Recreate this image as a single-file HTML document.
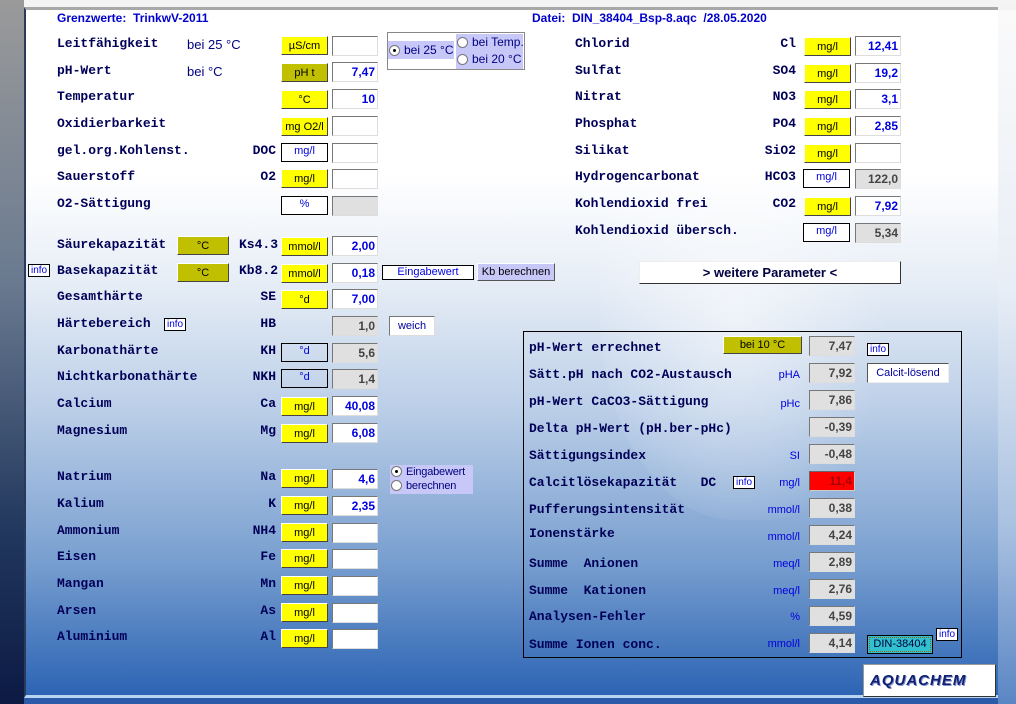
<!DOCTYPE html><html><head><meta charset="utf-8"><style>
*{margin:0;padding:0;box-sizing:border-box}
body{width:1016px;height:704px;overflow:hidden;position:relative;background:linear-gradient(#f4f4f4,#c8d4e4 40%,#4a78b8 80%,#2a5aa8);font-family:"Liberation Sans",sans-serif}
#ls{position:absolute;left:0;top:0;width:24px;height:704px;background:linear-gradient(#9a9a9a,#6a7a90 40%,#22385e 75%,#0c1a44)}
#pn{position:absolute;left:24px;top:7px;width:974px;height:691px;border-left:2px solid #2a3a5a;border-top:3px solid #a8a8a8;border-bottom:3px solid #b8d4f0;background:linear-gradient(#fff 0,#fff 24%,#e6edf6 40%,#bccfe8 58%,#7aa0d0 80%,#2c64b4 100%)}
#rs{position:absolute;left:998px;top:10px;width:18px;height:694px;background:linear-gradient(#fafafa,#e8eef6 40%,#a8c0e0 75%,#5a86c4)}
.drop{position:absolute;left:600px;top:60px;width:300px;height:460px;border-radius:50% 50% 45% 45%;background:radial-gradient(ellipse at 45% 55%,rgba(255,255,255,.55),rgba(255,255,255,0) 65%)}
.a{position:absolute;white-space:nowrap}
.l{position:absolute;font:bold 13px "Liberation Mono",monospace;color:#000058;white-space:pre;line-height:16px}
.s{position:absolute;font:bold 13px "Liberation Mono",monospace;color:#000058;white-space:pre;line-height:16px;text-align:right;width:60px}
.u{position:absolute;width:47px;height:19px;background:#ffff00;border:1px solid;border-color:#fff #444 #444 #fff;font:11px "Liberation Sans",sans-serif;text-align:center;line-height:19px;color:#000;white-space:nowrap}
.o{background:#c0c000}
.w{background:#fff;border:1px solid #000;color:#0000e0;line-height:15px}
.t{background:transparent;border:1px solid #000;color:#0000e0;line-height:15px}
.v{position:absolute;width:46px;height:20px;background:#fff;border:1px solid;border-color:#777 #ddd #ddd #777;font:bold 12px "Liberation Sans",sans-serif;color:#0000e0;text-align:right;padding-right:2px;line-height:19px}
.g{background:#e0e0e0;color:#444}
.i{position:absolute;font:10px "Liberation Sans",sans-serif;color:#0000e0;border:1px solid #000;background:#fff;padding:0 2px;line-height:11px}
.pu{position:absolute;font:11px "Liberation Sans",sans-serif;color:#0000e0;text-align:right;width:60px;line-height:14px}
.h{position:absolute;font:bold 12px "Liberation Sans",sans-serif;color:#0000cc;white-space:pre}
.rd{display:inline-block;width:11px;height:11px;border-radius:50%;background:#fff;border:1px solid #777;vertical-align:-2px;margin-right:4px;position:relative}
.rd.on::after{content:"";position:absolute;left:3px;top:3px;width:3px;height:3px;background:#000;border-radius:50%}
.n{font:12px "Liberation Sans",sans-serif;color:#000080}
.sm{font-size:11px;letter-spacing:-0.2px}
</style></head><body>
<div id="ls"></div><div id="rs"></div><div id="pn"></div><div class="drop"></div>
<div class="h" style="left:57px;top:11px">Grenzwerte:  TrinkwV-2011</div>
<div class="h" style="left:532px;top:11px">Datei:  DIN_38404_Bsp-8.aqc  /28.05.2020</div>

<div class="l" style="left:57px;top:36px">Leitfähigkeit</div><div class="a n" style="left:187px;top:37px;font-size:13px">bei 25 °C</div><div class="u" style="left:281px;top:36px">µS/cm</div><div class="v" style="left:332px;top:36px"></div>
<div class="l" style="left:57px;top:63px">pH-Wert</div><div class="a n" style="left:187px;top:64px;font-size:13px">bei  °C</div><div class="u o" style="left:281px;top:63px">pH t</div><div class="v" style="left:332px;top:62px">7,47</div>
<div class="l" style="left:57px;top:89px">Temperatur</div><div class="u" style="left:281px;top:90px">°C</div><div class="v" style="left:332px;top:89px">10</div>
<div class="l" style="left:57px;top:116px">Oxidierbarkeit</div><div class="u" style="left:281px;top:117px">mg O2/l</div><div class="v" style="left:332px;top:116px"></div>
<div class="l" style="left:57px;top:143px">gel.org.Kohlenst.</div><div class="s" style="left:216px;top:143px">DOC</div><div class="u w" style="left:281px;top:143px">mg/l</div><div class="v" style="left:332px;top:143px"></div>
<div class="l" style="left:57px;top:169px">Sauerstoff</div><div class="s" style="left:216px;top:169px">O2</div><div class="u" style="left:281px;top:169px">mg/l</div><div class="v" style="left:332px;top:169px"></div>
<div class="l" style="left:57px;top:196px">O2-Sättigung</div><div class="u w" style="left:281px;top:196px">%</div><div class="v g" style="left:332px;top:196px"></div>
<div class="l" style="left:57px;top:237px">Säurekapazität</div><div class="u o" style="left:177px;top:236px;width:52px">°C</div><div class="s" style="left:218px;top:237px">Ks4.3</div><div class="u" style="left:281px;top:237px">mmol/l</div><div class="v" style="left:332px;top:236px">2,00</div>
<div class="i" style="left:28px;top:264px">info</div>
<div class="l" style="left:57px;top:263px">Basekapazität</div><div class="u o" style="left:177px;top:263px;width:52px">°C</div><div class="s" style="left:218px;top:263px">Kb8.2</div><div class="u" style="left:281px;top:264px">mmol/l</div><div class="v" style="left:332px;top:263px">0,18</div>
<div class="a" style="left:382px;top:265px;width:92px;height:15px;background:#fff;border:1px solid #000;font:11px 'Liberation Sans',sans-serif;color:#0000e0;text-align:center;line-height:13px">Eingabewert</div>
<div class="a" style="left:477px;top:263px;width:78px;height:18px;background:#c8c8f8;border:1px solid;border-color:#fff #555 #555 #fff;font:11px 'Liberation Sans',sans-serif;color:#000;text-align:center;line-height:16px">Kb berechnen</div>
<div class="l" style="left:57px;top:289px">Gesamthärte</div><div class="s" style="left:216px;top:289px">SE</div><div class="u" style="left:281px;top:290px">°d</div><div class="v" style="left:332px;top:289px">7,00</div>
<div class="l" style="left:57px;top:316px">Härtebereich</div><div class="i" style="left:164px;top:318px">info</div><div class="s" style="left:216px;top:316px">HB</div><div class="v g" style="left:332px;top:316px">1,0</div>
<div class="a" style="left:389px;top:316px;width:46px;height:20px;background:#fff;border:1px solid;border-color:#777 #ddd #ddd #777;font:11px 'Liberation Sans',sans-serif;color:#0000a0;text-align:center;line-height:18px">weich</div>
<div class="l" style="left:57px;top:343px">Karbonathärte</div><div class="s" style="left:216px;top:343px">KH</div><div class="u t" style="left:281px;top:343px">°d</div><div class="v g" style="left:332px;top:343px">5,6</div>
<div class="l" style="left:57px;top:369px">Nichtkarbonathärte</div><div class="s" style="left:216px;top:369px">NKH</div><div class="u t" style="left:281px;top:369px">°d</div><div class="v g" style="left:332px;top:369px">1,4</div>
<div class="l" style="left:57px;top:396px">Calcium</div><div class="s" style="left:216px;top:396px">Ca</div><div class="u" style="left:281px;top:397px">mg/l</div><div class="v" style="left:332px;top:396px">40,08</div>
<div class="l" style="left:57px;top:423px">Magnesium</div><div class="s" style="left:216px;top:423px">Mg</div><div class="u" style="left:281px;top:424px">mg/l</div><div class="v" style="left:332px;top:423px">6,08</div>
<div class="l" style="left:57px;top:469px">Natrium</div><div class="s" style="left:216px;top:469px">Na</div><div class="u" style="left:281px;top:469px">mg/l</div><div class="v" style="left:332px;top:469px">4,6</div>
<div class="a n sm" style="left:390px;top:465px;width:83px;height:29px;background:#c8c8f8;line-height:14px;padding-left:1px"><div><span class="rd on"></span>Eingabewert</div><div><span class="rd"></span>berechnen</div></div>
<div class="l" style="left:57px;top:496px">Kalium</div><div class="s" style="left:216px;top:496px">K</div><div class="u" style="left:281px;top:496px">mg/l</div><div class="v" style="left:332px;top:496px">2,35</div>
<div class="l" style="left:57px;top:523px">Ammonium</div><div class="s" style="left:216px;top:523px">NH4</div><div class="u" style="left:281px;top:523px">mg/l</div><div class="v" style="left:332px;top:523px"></div>
<div class="l" style="left:57px;top:549px">Eisen</div><div class="s" style="left:216px;top:549px">Fe</div><div class="u" style="left:281px;top:549px">mg/l</div><div class="v" style="left:332px;top:549px"></div>
<div class="l" style="left:57px;top:576px">Mangan</div><div class="s" style="left:216px;top:576px">Mn</div><div class="u" style="left:281px;top:576px">mg/l</div><div class="v" style="left:332px;top:576px"></div>
<div class="l" style="left:57px;top:603px">Arsen</div><div class="s" style="left:216px;top:603px">As</div><div class="u" style="left:281px;top:603px">mg/l</div><div class="v" style="left:332px;top:603px"></div>
<div class="l" style="left:57px;top:629px">Aluminium</div><div class="s" style="left:216px;top:629px">Al</div><div class="u" style="left:281px;top:629px">mg/l</div><div class="v" style="left:332px;top:629px"></div>

<div class="a" style="left:387px;top:32px;width:138px;height:38px;border:1px solid #888;background:#fff"></div>
<div class="a n" style="left:388px;top:41px;width:66px;height:18px;background:#c8c8f8;line-height:18px;padding-left:1px"><span class="rd on" style="margin-right:4px"></span>bei 25 °C</div>
<div class="a n" style="left:456px;top:34px;width:67px;height:35px;background:#c8c8f8;line-height:17px;padding-left:1px"><div><span class="rd" style="margin-right:4px"></span>bei Temp.</div><div><span class="rd" style="margin-right:4px"></span>bei 20 °C</div></div>

<div class="l" style="left:575px;top:36px">Chlorid</div><div class="s" style="left:736px;top:36px">Cl</div><div class="u" style="left:804px;top:37px">mg/l</div><div class="v" style="left:855px;top:36px">12,41</div>
<div class="l" style="left:575px;top:63px">Sulfat</div><div class="s" style="left:736px;top:63px">SO4</div><div class="u" style="left:804px;top:64px">mg/l</div><div class="v" style="left:855px;top:63px">19,2</div>
<div class="l" style="left:575px;top:89px">Nitrat</div><div class="s" style="left:736px;top:89px">NO3</div><div class="u" style="left:804px;top:90px">mg/l</div><div class="v" style="left:855px;top:89px">3,1</div>
<div class="l" style="left:575px;top:116px">Phosphat</div><div class="s" style="left:736px;top:116px">PO4</div><div class="u" style="left:804px;top:117px">mg/l</div><div class="v" style="left:855px;top:116px">2,85</div>
<div class="l" style="left:575px;top:143px">Silikat</div><div class="s" style="left:736px;top:143px">SiO2</div><div class="u" style="left:804px;top:144px">mg/l</div><div class="v" style="left:855px;top:143px"></div>
<div class="l" style="left:575px;top:169px">Hydrogencarbonat</div><div class="s" style="left:736px;top:169px">HCO3</div><div class="u w" style="left:803px;top:169px">mg/l</div><div class="v g" style="left:855px;top:169px">122,0</div>
<div class="l" style="left:575px;top:196px">Kohlendioxid frei</div><div class="s" style="left:736px;top:196px">CO2</div><div class="u" style="left:804px;top:197px">mg/l</div><div class="v" style="left:855px;top:196px">7,92</div>
<div class="l" style="left:575px;top:223px">Kohlendioxid übersch.</div><div class="u w" style="left:803px;top:223px">mg/l</div><div class="v g" style="left:855px;top:223px">5,34</div>
<div class="a" style="left:639px;top:261px;width:262px;height:23px;background:#fff;border:1px solid;border-color:#eee #333 #333 #eee;font:bold 13px 'Liberation Sans',sans-serif;color:#000040;text-align:center;line-height:21px">&gt; weitere  Parameter &lt;</div>

<div class="a" style="left:523px;top:331px;width:439px;height:327px;border:1px solid #000"></div>
<div class="l" style="left:529px;top:340px">pH-Wert errechnet</div><div class="u o" style="left:723px;top:336px;width:79px;height:18px;line-height:16px">bei 10 °C</div><div class="v g" style="left:809px;top:336px">7,47</div><div class="i" style="left:867px;top:343px">info</div>
<div class="l" style="left:529px;top:367px">Sätt.pH nach CO2-Austausch</div><div class="pu" style="left:740px;top:368px">pHA</div><div class="v g" style="left:809px;top:363px">7,92</div>
<div class="a" style="left:867px;top:363px;width:82px;height:20px;background:#fff;border:1px solid;border-color:#555 #eee #eee #555;font:11px 'Liberation Sans',sans-serif;color:#0000a0;text-align:center;line-height:18px">Calcit-lösend</div>
<div class="l" style="left:529px;top:394px">pH-Wert CaCO3-Sättigung</div><div class="pu" style="left:740px;top:397px">pHc</div><div class="v g" style="left:809px;top:390px">7,86</div>
<div class="l" style="left:529px;top:421px">Delta pH-Wert (pH.ber-pHc)</div><div class="v g" style="left:809px;top:417px">-0,39</div>
<div class="l" style="left:529px;top:448px">Sättigungsindex</div><div class="pu" style="left:740px;top:449px">SI</div><div class="v g" style="left:809px;top:444px">-0,48</div>
<div class="l" style="left:529px;top:475px">Calcitlösekapazität   DC</div><div class="i" style="left:733px;top:476px">info</div><div class="pu" style="left:740px;top:476px">mg/l</div><div class="v" style="left:809px;top:471px;background:#f00;color:#a00;border-color:#666 #ccc #ccc #666">11,4</div>
<div class="l" style="left:529px;top:502px">Pufferungsintensität</div><div class="pu" style="left:740px;top:503px">mmol/l</div><div class="v g" style="left:809px;top:498px">0,38</div>
<div class="l" style="left:529px;top:526px">Ionenstärke</div><div class="pu" style="left:740px;top:530px">mmol/l</div><div class="v g" style="left:809px;top:525px">4,24</div>
<div class="l" style="left:529px;top:556px">Summe  Anionen</div><div class="pu" style="left:740px;top:557px">meq/l</div><div class="v g" style="left:809px;top:552px">2,89</div>
<div class="l" style="left:529px;top:583px">Summe  Kationen</div><div class="pu" style="left:740px;top:584px">meq/l</div><div class="v g" style="left:809px;top:579px">2,76</div>
<div class="l" style="left:529px;top:609px">Analysen-Fehler</div><div class="pu" style="left:740px;top:610px">%</div><div class="v g" style="left:809px;top:606px">4,59</div>
<div class="l" style="left:529px;top:637px">Summe Ionen conc.</div><div class="pu" style="left:740px;top:637px">mmol/l</div><div class="v g" style="left:809px;top:633px">4,14</div>
<div class="a" style="left:867px;top:635px;width:66px;height:19px;background:#30c0d0;border:1px solid #000;outline:1px dotted #a06000;outline-offset:-3px;font:11px 'Liberation Sans',sans-serif;color:#003;text-align:center;line-height:17px">DIN-38404</div>
<div class="i" style="left:936px;top:628px">info</div>

<div class="a" style="left:863px;top:664px;width:133px;height:33px;background:#fff;border:1px solid;border-color:#999 #333 #333 #999"></div>
<div class="a" style="left:870px;top:672px;font:italic 900 15px 'Liberation Sans',sans-serif;color:#102070;letter-spacing:1px;text-shadow:1px 1px 0 #8090d0">AQUACHEM</div>
</body></html>
